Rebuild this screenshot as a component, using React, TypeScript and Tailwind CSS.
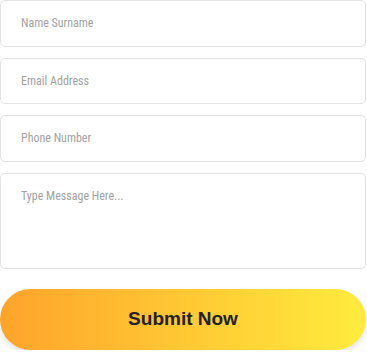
import React from 'react'

const fieldClass =
  'w-full h-[46.5px] rounded-[5px] border border-[#e3e3e3] bg-white px-[20px] text-[12px] font-stretch-condensed text-[#555] placeholder:text-[#a2a2a2] outline-none'

export default function App() {
  return (
    <form
      className="w-[366px] flex flex-col gap-[11px] font-['Roboto',sans-serif]"
      onSubmit={(e) => e.preventDefault()}
    >
      <input className={fieldClass} placeholder="Name Surname" />
      <input className={fieldClass} placeholder="Email Address" />
      <input className={fieldClass} placeholder="Phone Number" />
      <textarea
        className="w-full h-[96.5px] resize-none rounded-[5px] border border-[#e3e3e3] bg-white px-[20px] pt-[13px] text-[12px] font-stretch-condensed text-[#555] placeholder:text-[#a2a2a2] outline-none"
        placeholder="Type Message Here..."
      />
      <button
        type="submit"
        className="mt-[8.5px] h-[61px] w-full rounded-full bg-gradient-to-r from-[#ffa32b] to-[#ffec3d] shadow-[0_3px_6px_rgba(0,0,0,0.12)] font-['Liberation_Sans',sans-serif] text-[19px] font-bold text-[#222]"
      >
        Submit Now
      </button>
    </form>
  )
}
